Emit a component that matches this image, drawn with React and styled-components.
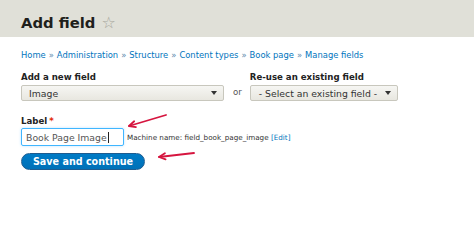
import React from "react";
import styled, { createGlobalStyle } from "styled-components";

const GlobalStyle = createGlobalStyle`
  html, body {
    margin: 0;
    padding: 0;
    background: #ffffff;
  }
  body {
    font-family: "DejaVu Sans", "Liberation Sans", sans-serif;
    color: #222;
  }
`;

const Page = styled.div`
  position: relative;
  width: 474px;
  height: 245px;
  overflow: hidden;
`;

const Header = styled.header`
  height: 37px;
  background: #e0e0d8;
  display: flex;
  align-items: flex-end;
  padding: 0 21px 6px;
  box-sizing: border-box;
  gap: 6px;
`;

const Title = styled.h1`
  margin: 0;
  font-size: 14.8px;
  font-weight: bold;
  color: #1f1f1c;
  line-height: 1;
`;

const Star = styled.span`
  font-size: 16px;
  line-height: 1;
  color: #a8a79d;
`;

const Content = styled.div`
  padding: 0 21px;
`;

const Breadcrumb = styled.nav`
  margin-top: 12px;
  font-size: 8.4px;
  line-height: 12px;
  color: #0074bd;
  a {
    color: #0074bd;
    text-decoration: none;
  }
  span {
    margin: 0 3px;
    color: #5a87aa;
  }
`;

const FieldRow = styled.div`
  display: flex;
  align-items: flex-end;
  margin-top: 11px;
`;

const Field = styled.div`
  display: flex;
  flex-direction: column;
`;

const FieldLabel = styled.label`
  font-size: 8.6px;
  font-weight: bold;
  color: #222;
  line-height: 11px;
  margin-bottom: ${(p) => (p.tight ? 1 : 2)}px;
  em {
    font-style: normal;
    color: #e32700;
    margin-left: 2px;
  }
`;

const Select = styled.div`
  box-sizing: border-box;
  width: ${(p) => p.w}px;
  height: 16px;
  border: 1px solid #c8c7bd;
  border-radius: 2px;
  background: linear-gradient(#f6f6f3, #e8e7e0);
  display: flex;
  align-items: center;
  justify-content: space-between;
  padding: 0 6px 0 ${(p) => p.pl}px;
  font-size: 9.3px;
  color: #333;
  &::after {
    content: "";
    border-left: 3px solid transparent;
    border-right: 3px solid transparent;
    border-top: 4px solid #333;
  }
`;

const Or = styled.span`
  font-size: 8.6px;
  color: #555;
  margin: 0 8px 4px 9px;
`;

const LabelBlock = styled.div`
  margin-top: 15px;
  display: flex;
  flex-direction: column;
`;

const InputRow = styled.div`
  display: flex;
  align-items: center;
  gap: 3px;
`;

const Input = styled.div`
  box-sizing: border-box;
  width: 103px;
  height: 18px;
  border: 1px solid #40b6ff;
  border-radius: 2px;
  box-shadow: 0 0 3px #bfe3ff;
  display: flex;
  align-items: center;
  padding-left: 4px;
  font-size: 9.3px;
  color: #555;
  &::after {
    content: "";
    width: 1px;
    height: 11px;
    background: #222;
    margin-left: 1px;
  }
`;

const Machine = styled.span`
  font-size: 7.2px;
  color: #333;
  a {
    color: #0074bd;
    text-decoration: none;
  }
`;

const Button = styled.button`
  margin-top: 7px;
  width: 124px;
  height: 17px;
  border: 1px solid #1e5c90;
  border-radius: 10px;
  background: linear-gradient(#007bc6, #0071b8);
  color: #fff;
  font-family: "DejaVu Sans", sans-serif;
  font-weight: bold;
  font-size: 9.6px;
  padding: 0;
  align-self: flex-start;
`;

const Arrows = styled.svg`
  position: absolute;
  left: 0;
  top: 0;
  pointer-events: none;
`;

const Arrow = ({ x1, y1, x2, y2 }) => {
  const a = Math.atan2(y2 - y1, x2 - x1);
  const l = 7;
  const s = 0.45;
  const p1 = [x2 - l * Math.cos(a - s), y2 - l * Math.sin(a - s)];
  const p2 = [x2 - l * Math.cos(a + s), y2 - l * Math.sin(a + s)];
  return (
    <g stroke="#d6153f" strokeWidth="1.8" strokeLinecap="round" strokeLinejoin="round" fill="none">
      <line x1={x1} y1={y1} x2={x2} y2={y2} />
      <polyline points={`${p1.join(",")} ${x2},${y2} ${p2.join(",")}`} />
    </g>
  );
};

const crumbs = ["Home", "Administration", "Structure", "Content types", "Book page", "Manage fields"];

export default function App() {
  return (
    <Page>
      <GlobalStyle />
      <Header>
        <Title>Add field</Title>
        <Star>☆</Star>
      </Header>
      <Content>
        <Breadcrumb>
          {crumbs.map((c, i) => (
            <React.Fragment key={c}>
              {i > 0 && <span>»</span>}
              <a href="#">{c}</a>
            </React.Fragment>
          ))}
        </Breadcrumb>
        <FieldRow>
          <Field>
            <FieldLabel>Add a new field</FieldLabel>
            <Select w={203} pl={7}>Image</Select>
          </Field>
          <Or>or</Or>
          <Field>
            <FieldLabel>Re-use an existing field</FieldLabel>
            <Select w={148} pl={8}>- Select an existing field -</Select>
          </Field>
        </FieldRow>
        <LabelBlock>
          <FieldLabel tight>
            Label<em>*</em>
          </FieldLabel>
          <InputRow>
            <Input>Book Page Image</Input>
            <Machine>
              Machine name: field_book_page_image <a href="#">[Edit]</a>
            </Machine>
          </InputRow>
          <Button>Save and continue</Button>
        </LabelBlock>
      </Content>
      <Arrows width="474" height="245">
        <Arrow x1={166} y1={115} x2={129} y2={126} />
        <Arrow x1={194} y1={153} x2={159} y2={157} />
      </Arrows>
    </Page>
  );
}
